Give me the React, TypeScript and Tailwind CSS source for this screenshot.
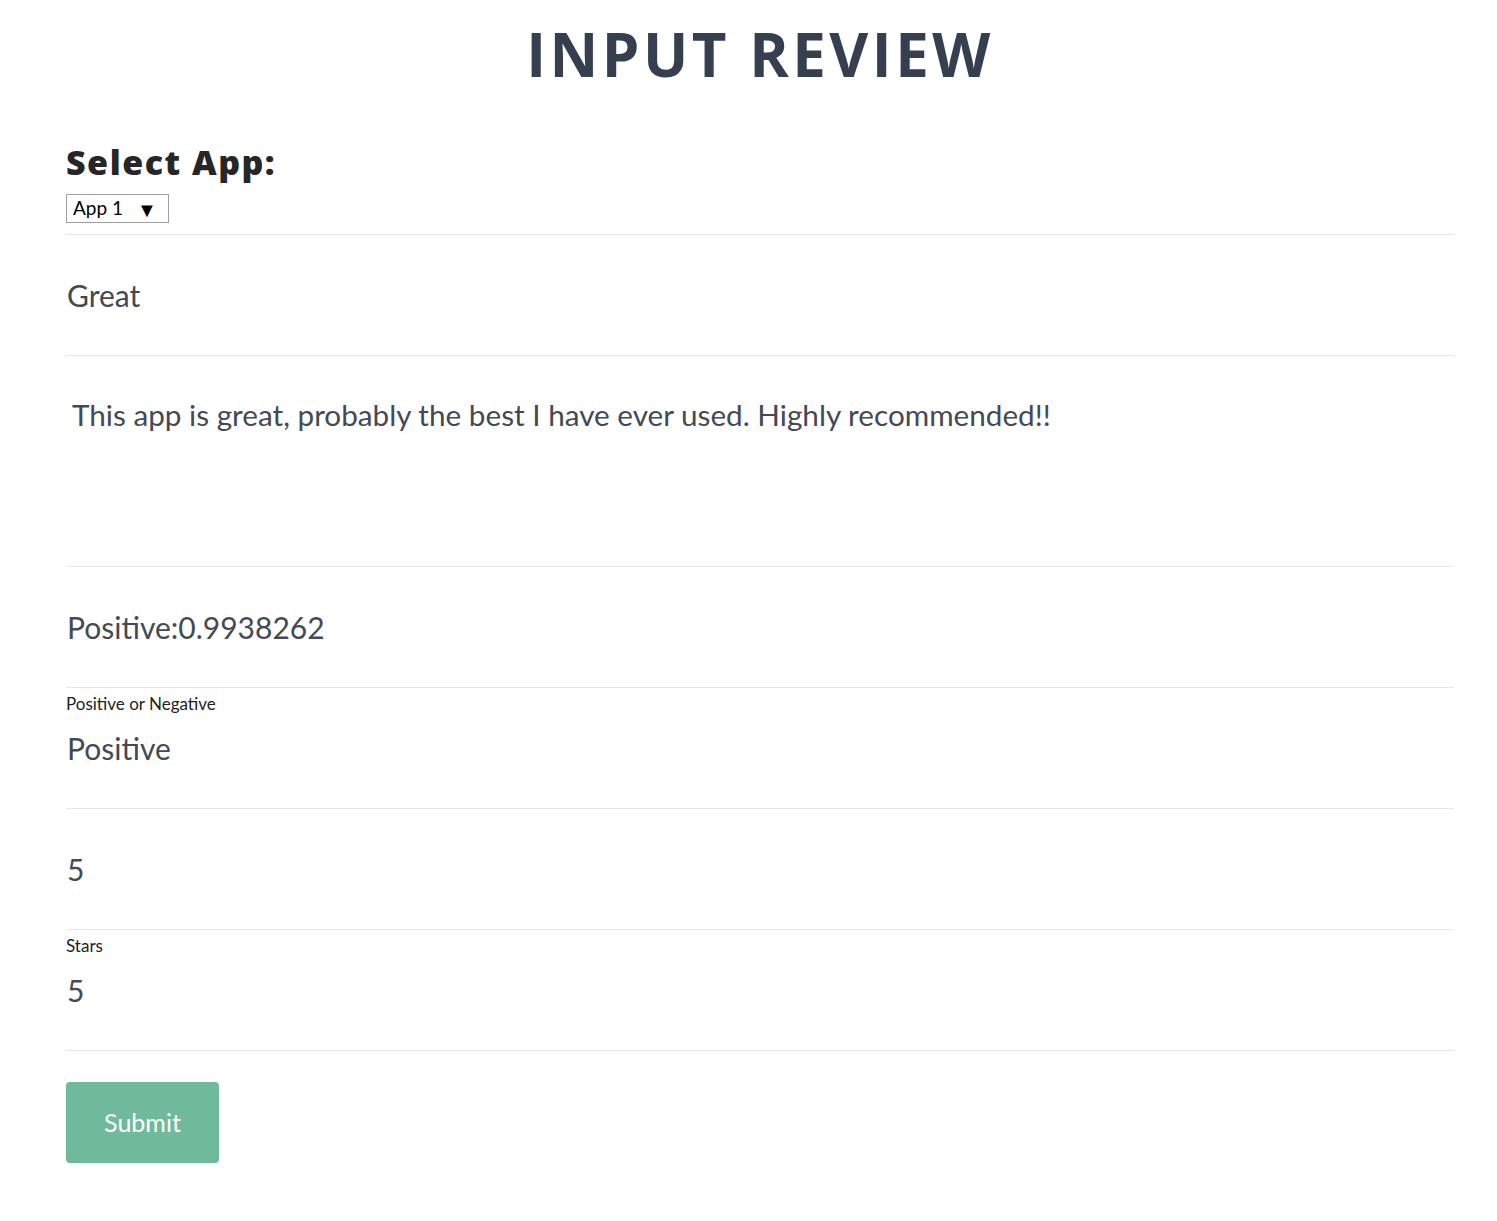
export default function App() {
  return (
    <div className="min-h-screen bg-white font-['Lato',sans-serif]">
      <div className="ml-[66px] w-[1388px] pt-[14px]">
        <h1 className="text-center text-[60px] leading-[80px] font-bold text-[#353f4f] font-['Open_Sans',sans-serif] tracking-[3.5px]">
          INPUT REVIEW
        </h1>

        <div className="mt-[48px] pb-[11px] border-b border-[#e8e8e8]">
          <h2 className="text-[34px] leading-[40px] font-extrabold text-[#262626] font-['Open_Sans',sans-serif] tracking-[1.5px]">
            Select App:
          </h2>
          <button className="mt-[12px] flex items-center gap-[14px] h-[29px] w-[103px] pl-[6px] border border-[#a0a0a0] text-[19px] text-black">
            <span>App 1</span>
            <span className="text-[20px] leading-none">▼</span>
          </button>
        </div>

        <Field value="Great" />

        <div className="h-[211px] border-b border-[#e8e8e8] pt-[37px] pl-[6px] text-[29.7px] text-[#434a54]">
          This app is great, probably the best I have ever used. Highly recommended!!
        </div>

        <Field value="Positive:0.9938262" />
        <Field label="Positive or Negative" value="Positive" />
        <Field value="5" />
        <Field label="Stars" value="5" />

        <button className="mt-[31px] h-[81px] w-[153px] rounded-[4px] bg-[#6fba9b] text-[25px] text-white">
          Submit
        </button>
      </div>
    </div>
  )
}

function Field({ label, value }: { label?: string; value: string }) {
  return (
    <div className="relative h-[121px] border-b border-[#e8e8e8] flex items-center pl-[1px]">
      {label && (
        <span className="absolute left-0 top-[3px] text-[17px] text-[#222]">{label}</span>
      )}
      <span className="text-[30px] text-[#434a54]">{value}</span>
    </div>
  )
}
